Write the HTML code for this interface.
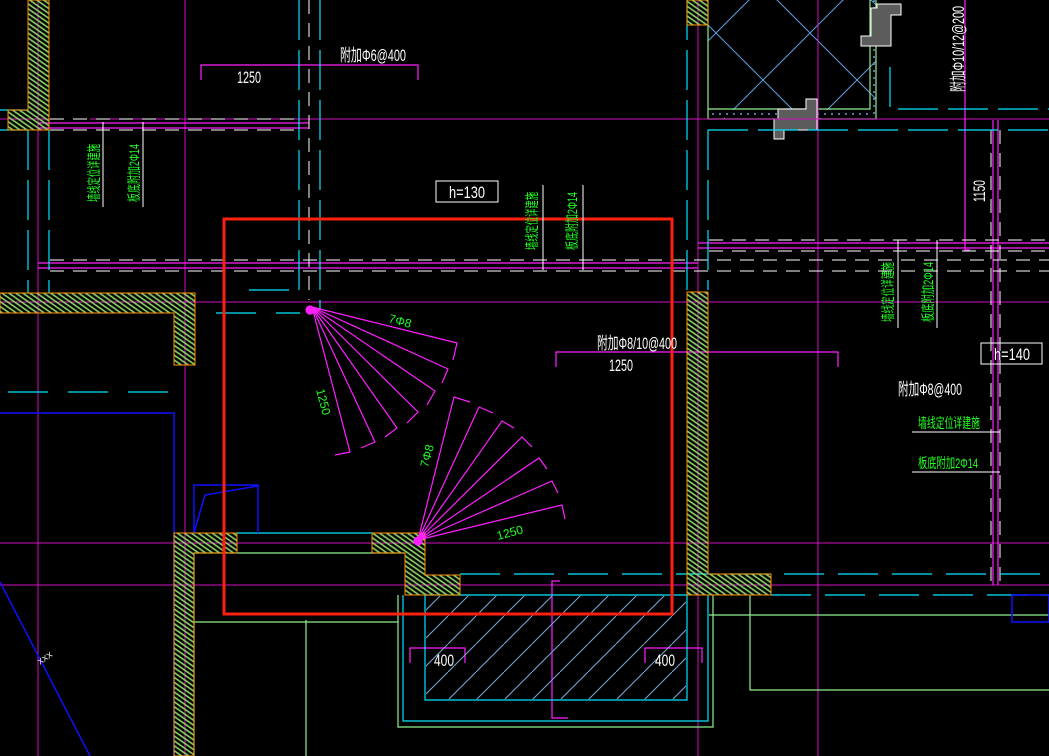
<!DOCTYPE html>
<html><head><meta charset="utf-8"><style>
html,body{margin:0;padding:0;background:#000;overflow:hidden}
svg{display:block}
text{font-family:"Liberation Sans","Noto Sans CJK SC",sans-serif}
</style></head><body>
<svg width="1049" height="756" viewBox="0 0 1049 756" xmlns="http://www.w3.org/2000/svg">
<defs>
<pattern id="h" width="4" height="4" patternUnits="userSpaceOnUse" patternTransform="rotate(-55)">
<line x1="1" y1="0" x2="1" y2="4" stroke="#8fd66a" stroke-width="1.6"/>
</pattern>
<pattern id="d" width="94" height="94" patternUnits="userSpaceOnUse" x="716" y="33">
<path d="M0 0L94 94M94 0L0 94" stroke="#5f9fe0" stroke-width="1"/>
</pattern>
<pattern id="dh" width="28" height="28" patternUnits="userSpaceOnUse">
<path d="M0 28L28 0" stroke="#7aaad8" stroke-width="1"/>
</pattern>
</defs>
<rect width="1049" height="756" fill="#000"/>

<rect x="708" y="0" width="168" height="119" fill="url(#d)"/>
<path d="M708 0V119H876V0M708 109H870V0" fill="none" stroke="#8ff08f" stroke-width="1.2"/>
<rect x="709" y="110" width="161" height="8" fill="#000"/>
<path d="M712 114H868" stroke="#6aa0e0" stroke-width="1.5" stroke-dasharray="2 5"/>
<path d="M874 0V116" stroke="#6aa0e0" stroke-width="1.5" stroke-dasharray="2 5"/>
<path d="M778 109H806V99H817V130H784V139H774V119H778Z" fill="#5c5c5c" stroke="#fff" stroke-width="1"/>
<path d="M877 4H901V15H891V46H861V36H871V8H877Z" fill="#5c5c5c" stroke="#fff" stroke-width="1"/>

<g stroke="#d010c0" stroke-width="1">
<path d="M38 0V756M185 0V756M818 0V756M698 0V756"/>
<path d="M0 119H53M90 119H1049M0 302H1049M0 543H1049M0 585H1049"/>
</g>
<g stroke="#ff20ff" stroke-width="1.2" fill="none">
<path d="M38 123H309M38 128H309M38 263H698M38 268H698M698 243H1049M698 248H1049"/>
<path d="M965 0V250H970M993 120V585M998 120V585"/>
<path d="M201 80V65H418V80M556 367V352H838V367M410 663V648H465V663M645 663V648H702V663M560 581H552V718H568"/>
</g>
<g stroke="#fff" stroke-width="1" stroke-dasharray="14 9" fill="none">
<path d="M50 119H300M50 130H300M50 260H1049M50 271H1049M709 240H1049M709 251H1049"/>
<path d="M309 0V300M991 130V585M1000 130V585"/>
</g>
<g stroke="#00e5ff" stroke-width="1.2" fill="none">
<path d="M299 0V290H240M320 0V310" stroke-dasharray="40 10"/>
<path d="M28 130V293M49 130V293" stroke-dasharray="40 10"/>
<path d="M687 0V290M708 130V290M890 67V109H1049M708 130H1049" stroke-dasharray="40 10"/>
<path d="M0 110H28M0 130H28"/>
<path d="M8 392H175M216 313H300" stroke-dasharray="40 20"/>
<path d="M460 574H1049M771 595H1049" stroke-dasharray="40 14"/>
<path d="M425 595H687V700H425ZM403 595V721H708V595"/>
<path d="M237 533H372"/>
</g>
<rect x="426" y="596" width="260" height="103" fill="url(#dh)"/>
<g stroke="#8ff08f" stroke-width="1.2" fill="none">
<path d="M194 553V756M194 553H405M194 622H398M398 595V727H713V595M750 595V690H1049M306 620V756M709 615H1049"/>
</g>
<g stroke="#1010ff" stroke-width="1.5" fill="none">
<path d="M0 413H174V756M0 582L90 756M194 533V485H258V533M194 533L205 495L258 486"/>
<path d="M1012 595H1049V622H1012Z"/>
</g>

<g fill="url(#h)" stroke="#ff9000" stroke-width="1">
<path d="M28 0H49V130H8V110H28Z"/>
<path d="M0 293H195V365H174V313H0Z"/>
<path d="M687 0H708V25H687Z"/>
<path d="M687 292H708V574H771V595H687Z"/>
<path d="M174 533H237V553H194V756H174Z"/>
<path d="M372 533H425V575H460V595H405V553H372Z"/>
</g>

<g stroke="#ff20ff" stroke-width="1.2" fill="none">
<path d="M312 307L457 343L453 360M312 307L448 369L442 383M312 307L435 391L427 405M312 307L418 412L407 423M312 307L397 428L385 437M312 307L375 442L361 448M312 307L350 452L335 455"/>
<path d="M418 540L454 397L470 402M418 540L479 407L493 413M418 540L502 421L514 428M418 540L522 437L532 447M418 540L539 458L547 469M418 540L552 481L558 493M418 540L562 505L565 519"/>
<circle cx="310" cy="310" r="4" fill="#ff20ff"/><circle cx="418" cy="541" r="4" fill="#ff20ff"/>
</g>

<rect x="224" y="219" width="448" height="395" fill="none" stroke="#ff2010" stroke-width="3"/>

<g fill="#fff" font-size="17">
<text x="340" y="61" textLength="66" lengthAdjust="spacingAndGlyphs">附加Φ6@400</text>
<text x="237" y="83" textLength="24" lengthAdjust="spacingAndGlyphs">1250</text>
<text x="597" y="349" textLength="80" lengthAdjust="spacingAndGlyphs">附加Φ8/10@400</text>
<text x="609" y="371" textLength="24" lengthAdjust="spacingAndGlyphs">1250</text>
<text x="898" y="395" textLength="64" lengthAdjust="spacingAndGlyphs">附加Φ8@400</text>
<text x="434" y="666" textLength="20" lengthAdjust="spacingAndGlyphs">400</text>
<text x="655" y="666" textLength="20" lengthAdjust="spacingAndGlyphs">400</text>
<text x="449" y="198" textLength="36" lengthAdjust="spacingAndGlyphs">h=130</text>
<text x="994" y="360" textLength="36" lengthAdjust="spacingAndGlyphs">h=140</text>
<text transform="translate(964,92) rotate(-90)" textLength="86" lengthAdjust="spacingAndGlyphs">附加Φ10/12@200</text>
<text transform="translate(985,202) rotate(-90)" textLength="22" lengthAdjust="spacingAndGlyphs">1150</text>
</g>
<g fill="none" stroke="#fff" stroke-width="1">
<rect x="436" y="181" width="62" height="21"/>
<rect x="981" y="343" width="61" height="21"/>
<path d="M103 122V207M143 122V207M543 185V270M583 185V270M898 240V328M937 240V328M912 432H1000M912 472H1000"/>
</g>
<g fill="#20ff20" font-size="14">
<text transform="translate(99,202) rotate(-90)" textLength="58" lengthAdjust="spacingAndGlyphs">墙线定位详建施</text>
<text transform="translate(139,202) rotate(-90)" textLength="58" lengthAdjust="spacingAndGlyphs">板底附加2Φ14</text>
<text transform="translate(537,250) rotate(-90)" textLength="58" lengthAdjust="spacingAndGlyphs">墙线定位详建施</text>
<text transform="translate(577,250) rotate(-90)" textLength="58" lengthAdjust="spacingAndGlyphs">板底附加2Φ14</text>
<text transform="translate(893,322) rotate(-90)" textLength="60" lengthAdjust="spacingAndGlyphs">墙线定位详建施</text>
<text transform="translate(933,322) rotate(-90)" textLength="60" lengthAdjust="spacingAndGlyphs">板底附加2Φ14</text>
<text x="918" y="428" textLength="62" lengthAdjust="spacingAndGlyphs">墙线定位详建施</text>
<text x="918" y="468" textLength="60" lengthAdjust="spacingAndGlyphs">板底附加2Φ14</text>
</g>
<g fill="#20ff20" font-size="12">
<text transform="translate(388,322) rotate(15)">7Φ8</text>
<text transform="translate(316,390) rotate(75)">1250</text>
<text transform="translate(428,468) rotate(-75)">7Φ8</text>
<text transform="translate(498,540) rotate(-15)">1250</text>
</g>
<g fill="#fff" font-size="8"><text transform="translate(40,665) rotate(-35)">XXX</text></g>
</svg>
</body></html>
